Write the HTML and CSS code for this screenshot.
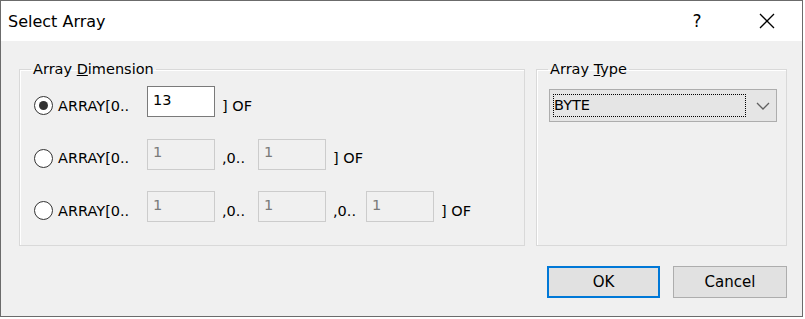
FILE: index.html
```html
<!DOCTYPE html>
<html lang="en">
<head>
  <meta charset="UTF-8"/>
  <title>Select Array</title>
  <link rel="stylesheet" href="styles.css">
</head>
<body>

  <div class="dialog">
    <div class="titlebar">
      <span class="title">Select Array</span>
      <span class="cap-btn">?</span>
      <span class="cap-btn">
        <svg width="16" height="16" viewBox="0 0 16 16">
          <path d="M1 1 L15 15 M15 1 L1 15" stroke="#000" stroke-width="1.3" fill="none"/>
        </svg>
      </span>
    </div>

    <div class="content">
      <div class="groups">
        <!-- 배열 차원 -->
        <fieldset class="group group-dim">
          <legend>Array <u>D</u>imension</legend>
          <div class="dim-grid">
            <label class="radio"><span class="dot on"></span>ARRAY[0..</label>
            <input class="num" type="text" value="13">
            <span class="txt">] OF</span>

            <label class="radio"><span class="dot"></span>ARRAY[0..</label>
            <input class="num" type="text" value="1" disabled>
            <span class="txt">,0..</span>
            <input class="num" type="text" value="1" disabled>
            <span class="txt">] OF</span>

            <label class="radio"><span class="dot"></span>ARRAY[0..</label>
            <input class="num" type="text" value="1" disabled>
            <span class="txt">,0..</span>
            <input class="num" type="text" value="1" disabled>
            <span class="txt">,0..</span>
            <input class="num" type="text" value="1" disabled>
            <span class="txt">] OF</span>
          </div>
        </fieldset>

        <!-- 배열 타입 -->
        <fieldset class="group group-type">
          <legend>Array <u>T</u>ype</legend>
          <div class="combo">
            <span class="combo-text">BYTE</span>
            <svg class="chev" width="14" height="8" viewBox="0 0 14 8">
              <path d="M1 1 L7 7 L13 1" stroke="#606060" stroke-width="1.3" fill="none"/>
            </svg>
          </div>
        </fieldset>
      </div>

      <div class="buttons">
        <button class="btn btn-default">OK</button>
        <button class="btn">Cancel</button>
      </div>
    </div>
  </div>

</body>
</html>
```

FILE: styles.css
```css
* {
  box-sizing: border-box;
}
body {
  margin: 0;
  background: #fff;
  font-family: "DejaVu Sans", "Noto Sans CJK KR", sans-serif;
  font-size: 14.5px;
  color: #000;
}
.dialog {
  width: 803px;
  height: 317px;
  border: 1px solid #6b6b6b;
  display: flex;
  flex-direction: column;
}
.titlebar {
  height: 40px;
  background: #fff;
  display: flex;
  align-items: center;
  padding-left: 7px;
}
.title {
  flex: 1;
  font-size: 16px;
}
.cap-btn {
  width: 70px;
  height: 40px;
  display: flex;
  align-items: center;
  justify-content: center;
  font-size: 17px;
}
.content {
  flex: 1;
  background: #f0f0f0;
  padding: 18px 15px 18px 18px;
  display: flex;
  flex-direction: column;
}
.groups {
  display: flex;
  gap: 11px;
}
.group {
  margin: 0;
  min-width: 0;
  border: 1px solid #d9d9d9;
  box-shadow: inset 1px 1px 0 #fff;
  padding: 7px 12px 23px 14px;
}
.group legend {
  padding: 0 2px;
  line-height: 20px;
}
.group-dim {
  width: 506px;
  flex-shrink: 0;
}
.group-dim legend {
  margin-left: -3px;
}
.group-type {
  flex: 1;
  padding: 7px 0 23px 12px;
}
.group-type legend {
  margin-left: -1px;
}
.dim-grid {
  display: grid;
  grid-template-columns: 113px 68px 43px 68px 40px 68px auto;
  grid-auto-rows: 31px;
  row-gap: 21.5px;
  align-items: center;
}
.dim-grid .radio {
  grid-column: 1;
}
.radio {
  display: flex;
  align-items: center;
  gap: 5px;
  margin-top: 8px;
  white-space: nowrap;
}
.dot {
  width: 19px;
  height: 19px;
  border: 1px solid #333;
  border-radius: 50%;
  background: #fff;
  display: flex;
  align-items: center;
  justify-content: center;
}
.dot.on::after {
  content: "";
  width: 9px;
  height: 9px;
  border-radius: 50%;
  background: #333;
}
.txt {
  padding-left: 7px;
  margin-top: 8px;
  white-space: nowrap;
}
.num {
  width: 68px;
  height: 31px;
  border: 1px solid #7a7a7a;
  background: #fff;
  font: inherit;
  color: #000;
  padding: 0 0 4px 5px;
  outline: none;
}
.num:disabled {
  border-color: #ccc;
  background: #f0f0f0;
  color: #7a7a7a;
}
.combo {
  width: 228px;
  height: 33px;
  margin-top: 3px;
  border: 1px solid #adadad;
  background: #e5e5e5;
  display: flex;
  align-items: center;
  padding: 4px 0 4px 3px;
}
.combo-text {
  width: 193px;
  height: 23px;
  border: 1px dotted #000;
  line-height: 21px;
}
.chev {
  margin-left: 10px;
}
.buttons {
  margin-top: 20px;
  display: flex;
  justify-content: flex-end;
  gap: 13px;
}
.btn {
  width: 114px;
  height: 32px;
  border: 1px solid #adadad;
  background: #e1e1e1;
  font: inherit;
  font-size: 15px;
  color: #000;
}
.btn-default {
  width: 113px;
  border: 2px solid #0078d7;
}
```
